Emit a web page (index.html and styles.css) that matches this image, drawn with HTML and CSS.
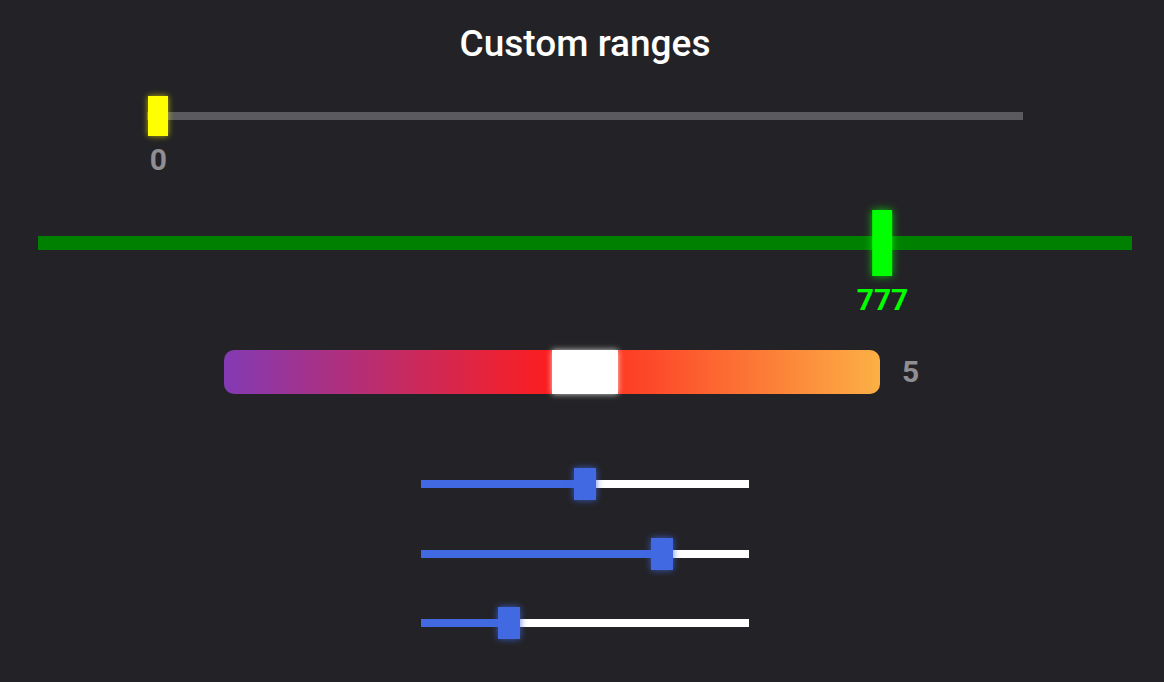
FILE: index.html
```html
<!DOCTYPE html>
<html lang="en">
<head>
<meta charset="utf-8">
<title>Custom ranges</title>
<link rel="stylesheet" href="styles.css">
</head>
<body>
<main class="page">
  <h1 class="title">Custom ranges</h1>

  <div class="range range-yellow" style="--v:0">
    <div class="track"></div>
    <div class="knob">
      <div class="thumb"></div>
      <div class="label">0</div>
    </div>
  </div>

  <div class="range range-green" style="--v:0.777">
    <div class="track"></div>
    <div class="knob">
      <div class="thumb"></div>
      <div class="label">777</div>
    </div>
  </div>

  <div class="gradient-row">
    <div class="range range-gradient" style="--v:0.5556">
      <div class="track"></div>
      <div class="knob">
        <div class="thumb"></div>
      </div>
    </div>
    <output class="value">5</output>
  </div>

  <div class="blue-group">
    <div class="range range-blue" style="--v:0.5">
      <div class="track"><div class="fill"></div></div>
      <div class="knob"><div class="thumb"></div></div>
    </div>
    <div class="range range-blue" style="--v:0.75">
      <div class="track"><div class="fill"></div></div>
      <div class="knob"><div class="thumb"></div></div>
    </div>
    <div class="range range-blue" style="--v:0.25">
      <div class="track"><div class="fill"></div></div>
      <div class="knob"><div class="thumb"></div></div>
    </div>
  </div>
</main>
</body>
</html>
```

FILE: styles.css
```css
html, body {
  margin: 0;
  padding: 0;
  background: #232226;
  height: 100%;
}

body {
  font-family: Roboto, "Liberation Sans", Arial, sans-serif;
  overflow: hidden;
}

.page {
  display: flex;
  flex-direction: column;
  align-items: center;
  padding: 23px 32px 0 38px;
}

.title {
  margin: 0;
  font-size: 37px;
  line-height: 42px;
  font-weight: 500;
  color: #ffffff;
}

.range {
  position: relative;
  --tw: 20px;
}

.track {
  position: relative;
  overflow: hidden;
}

.knob {
  position: absolute;
  top: 0;
  left: calc(var(--tw) / 2 + var(--v) * (100% - var(--tw)));
  transform: translateX(-50%);
  display: flex;
  flex-direction: column;
  align-items: center;
}

.thumb {
  width: var(--tw);
  flex: none;
}

.label {
  font-size: 30px;
  line-height: 30px;
  font-weight: 700;
  white-space: nowrap;
}

/* yellow range */
.range-yellow {
  width: 80%;
  height: 40px;
  margin-top: 31px;
  display: flex;
  align-items: center;
}
.range-yellow .track {
  width: 100%;
  height: 8px;
  background: #5b5a5e;
}
.range-yellow .knob {
  margin-left: 1px;
}
.range-yellow .thumb {
  height: 40px;
  background: #ffff00;
  box-shadow: 0 0 6px rgba(255, 255, 0, 0.65);
}
.range-yellow .label {
  margin-top: 9px;
  color: #8e8e93;
}

/* green range */
.range-green {
  width: 100%;
  height: 66px;
  margin-top: 74px;
  display: flex;
  align-items: center;
}
.range-green .track {
  width: 100%;
  height: 14px;
  background: #008000;
}
.range-green .thumb {
  height: 66px;
  background: #00ff00;
  box-shadow: 0 0 8px rgba(0, 255, 0, 0.7);
}
.range-green .label {
  margin-top: 9px;
  color: #00ff00;
}

/* gradient range */
.gradient-row {
  display: flex;
  align-items: center;
  margin-top: 74px;
}
.range-gradient {
  --tw: 66px;
  width: 656px;
  height: 44px;
}
.range-gradient .track {
  width: 100%;
  height: 44px;
  border-radius: 10px;
  background: linear-gradient(to right, #833ab4, #fd1d1d, #fcb045);
}
.range-gradient .thumb {
  height: 44px;
  background: #ffffff;
  box-shadow: 0 0 6px rgba(255, 255, 255, 0.8);
}
.value {
  width: 44px;
  margin-left: 22px;
  font-size: 30px;
  line-height: 30px;
  font-weight: 700;
  color: #8e8e93;
}

/* blue ranges */
.blue-group {
  display: flex;
  flex-direction: column;
  align-items: center;
  gap: 37.5px;
  margin-top: 74px;
}
.range-blue {
  --tw: 22px;
  width: 328px;
  height: 32px;
  display: flex;
  align-items: center;
}
.range-blue .track {
  width: 100%;
  height: 8px;
  background: #ffffff;
}
.range-blue .fill {
  width: calc(var(--tw) / 2 + var(--v) * (100% - var(--tw)));
  height: 100%;
  background: #4169e1;
}
.range-blue .thumb {
  height: 32px;
  background: #4169e1;
  box-shadow: 0 0 7px rgba(65, 105, 225, 0.85);
}
```
